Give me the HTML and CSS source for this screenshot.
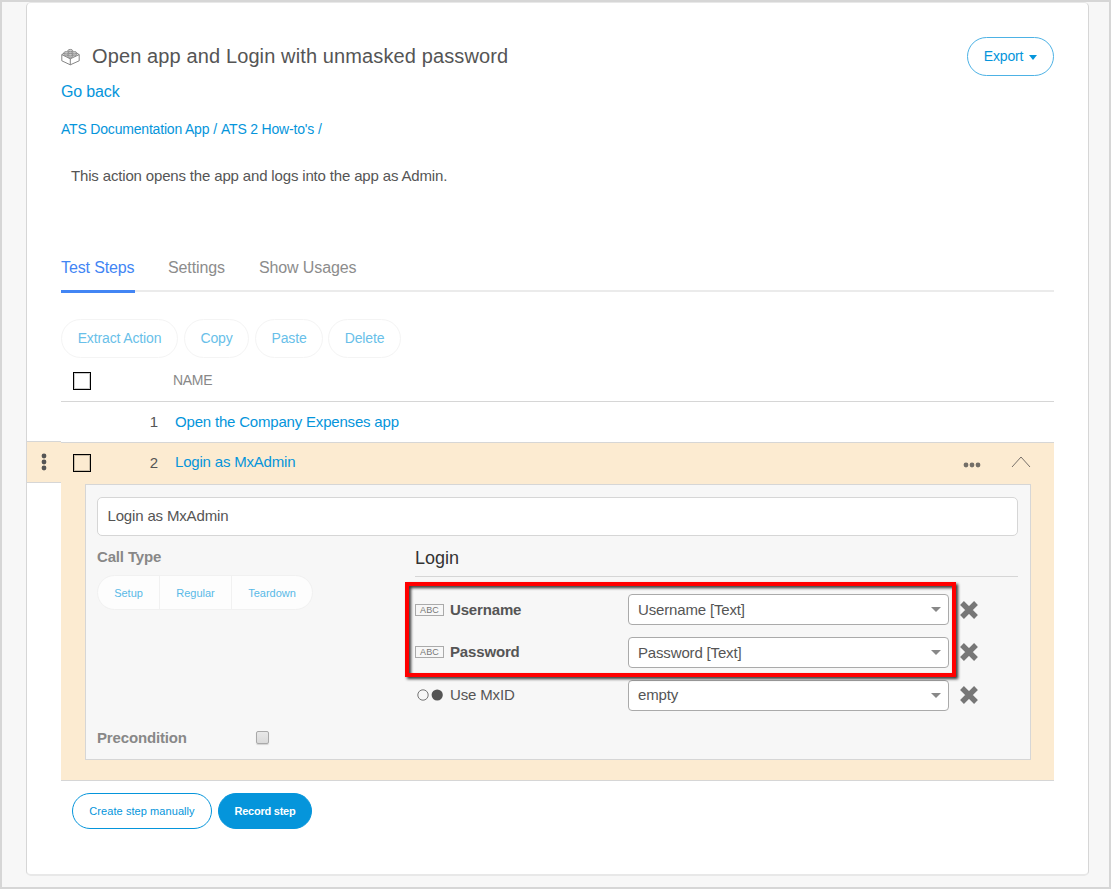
FILE: index.html
```html
<!DOCTYPE html>
<html lang="en">
<head>
<meta charset="utf-8">
<title>Open app and Login with unmasked password</title>
<link rel="stylesheet" href="styles.css">
</head>
<body>
<div class="frame">
<main class="card">
  <header class="header">
    <svg class="brick" width="20" height="18" viewBox="0 0 20 18" fill="none" stroke="#777" stroke-width=".9"><path fill="#fff" d="M.8 6.6V12.8L9.3 16.8L18.2 12.8V6.6L9.3 10.8Z"/><path d="M9.3 10.8V16.8M.8 6.6L3.6 4.8M18.2 6.6L15.2 4.8"/><g fill="#ccc" stroke="#888"><path d="M7 2.6v2a2.3 1.2 0 0 0 4.6 0v-2"/><ellipse cx="9.3" cy="2.6" rx="2.3" ry="1.2"/><path d="M3 4.8v2a2.3 1.2 0 0 0 4.6 0v-2M11 4.8v2a2.3 1.2 0 0 0 4.6 0v-2"/><ellipse cx="5.3" cy="4.8" rx="2.3" ry="1.2"/><ellipse cx="13.3" cy="4.8" rx="2.3" ry="1.2"/><path d="M7 6.8v2a2.3 1.2 0 0 0 4.6 0v-2"/><ellipse cx="9.3" cy="6.8" rx="2.3" ry="1.2"/></g></svg>
    <h1 class="title">Open app and Login with unmasked password</h1>
    <button class="btn export">Export<span class="caret"></span></button>
  </header>
  <a class="back"><span>Go back</span></a>
  <nav class="crumbs"><a>ATS Documentation App</a><i>/</i><a>ATS 2 How-to's</a><i>/</i></nav>
  <p class="description">This action opens the app and logs into the app as Admin.</p>
  <nav class="tabs"><a class="tab active">Test Steps</a><a class="tab settings">Settings</a><a class="tab usages">Show Usages</a></nav>
  <div class="toolbar">
    <button class="btn ghost extract">Extract Action</button>
    <button class="btn ghost copy">Copy</button>
    <button class="btn ghost paste">Paste</button>
    <button class="btn ghost delete">Delete</button>
  </div>
  <div class="row head"><span class="check"></span><span class="num"></span><span class="name">NAME</span></div>
  <div class="row first"><span class="check hidden"></span><span class="num">1</span><a class="link one">Open the Company Expenses app</a></div>
  <section class="step">
    <div class="row second">
      <span class="handle"><svg width="6" height="18" viewBox="0 0 6 18" fill="#555"><circle cx="3" cy="3" r="2.4"/><circle cx="3" cy="9" r="2.4"/><circle cx="3" cy="15" r="2.4"/></svg></span>
      <span class="check"></span><span class="num">2</span><a class="link two">Login as MxAdmin</a>
      <svg class="dots" width="18" height="6" viewBox="0 0 18 6" fill="#736e67"><circle cx="3" cy="3" r="2.4"/><circle cx="9" cy="3" r="2.4"/><circle cx="15" cy="3" r="2.4"/></svg>
      <svg class="chevron" width="20" height="12" viewBox="0 0 20 12" fill="none" stroke="#777069" stroke-width="1"><path d="M1 11L10 1L19 11"/></svg>
    </div>
    <div class="panel">
      <div class="input"><span>Login as MxAdmin</span></div>
      <div class="columns">
        <div class="left">
          <h2 class="label calltype">Call Type</h2>
          <div class="segments"><button class="setup">Setup</button><button class="regular">Regular</button><button class="teardown">Teardown</button></div>
        </div>
        <div class="right">
          <h2 class="heading"><span>Login</span></h2>
          <div class="params">
            <div class="param"><span class="abc">ABC</span><b class="plabel user">Username</b><div class="select"><span>Username [Text]</span></div><svg class="cross" width="20" height="20" viewBox="0 0 20 20"><path d="M3 3L17 17M17 3L3 17"/></svg></div>
            <div class="param raised"><span class="abc">ABC</span><b class="plabel pass">Password</b><div class="select"><span>Password [Text]</span></div><svg class="cross" width="20" height="20" viewBox="0 0 20 20"><path d="M3 3L17 17M17 3L3 17"/></svg></div>
            <div class="param raised"><svg class="bool" width="30" height="12" viewBox="0 0 30 12"><circle cx="8" cy="6" r="5.2" fill="none" stroke="#666" stroke-width=".9"/><circle cx="22.2" cy="6" r="5.6" fill="#555"/></svg><span class="plabel mxid">Use MxID</span><div class="select"><span class="empty">empty</span></div><svg class="cross" width="20" height="20" viewBox="0 0 20 20"><path d="M3 3L17 17M17 3L3 17"/></svg></div>
            <div class="highlight"></div>
          </div>
        </div>
      </div>
      <div class="precondition"><span class="label pre">Precondition</span><span class="box"></span></div>
    </div>
  </section>
  <footer class="actions"><button class="btn small create">Create step manually</button><button class="btn small record">Record step</button></footer>
</main>
</div>
</body>
</html>
```

FILE: styles.css
```css
* { box-sizing: border-box; }
body { margin: 0; font-family: "Liberation Sans", Arial, sans-serif; font-size: 15px; letter-spacing: -.16px; color: #555; }
h1, h2, p { margin: 0; font-weight: normal; }
i { font-style: normal; }
button { font-family: inherit; padding: 0; white-space: nowrap; }
svg { display: block; flex: none; }
a, span, b { white-space: nowrap; }
.frame { width: 1111px; height: 889px; border: 2px solid #d6d6d6; background: #f7f7f7; padding-left: 24px; overflow: hidden; }
.card { width: 1063px; height: 874px; background: #fff; border: 1px solid #d6d6d6; border-top-color: #e8e8e8; border-bottom: 2px solid #e8e8e8; border-radius: 5px; padding: 34px 34px 0; }

.header { display: flex; align-items: center; height: 39px; }
.title { font-size: 20px; letter-spacing: .12px; margin-left: 11px; padding-bottom: 1px; }
.btn { border: 1px solid #0595db; border-radius: 20px; background: #fff; color: #0595db; height: 39px; font-size: 14px; letter-spacing: -.14px; padding-bottom: 2px; flex: none; }
.export { width: 87px; margin-left: auto; display: flex; align-items: center; justify-content: center; border: 1.5px solid #4db2e5; }
.caret { border: 4.5px solid transparent; border-top: 5px solid #0595db; border-bottom: 0; margin: 4px 0 0 6px; }
.back { display: flex; align-items: center; height: 30px; font-size: 16px; color: #0595db; padding-top: 1px; }
.crumbs { display: flex; align-items: center; height: 45px; gap: 4px; font-size: 14px; letter-spacing: -.19px; color: #0595db; }
.description { height: 48px; line-height: 49px; padding-left: 10px; }
.tabs { display: flex; margin-top: 44px; height: 49px; border-bottom: 2px solid #ebebeb; font-size: 16px; line-height: 49px; letter-spacing: -.12px; color: #8c8c8c; }
.tab { height: 50px; }
.active { width: 74px; color: #4285f4; border-bottom: 3px solid #4285f4; }
.settings { margin-left: 33px; width: 57px; }
.usages { margin-left: 34px; }
.toolbar { display: flex; gap: 6px; margin-top: 27px; }
.ghost { border-color: #f4f4f4; color: #69bfe9; }
.extract { width: 117px; }
.copy { width: 65px; }
.paste { width: 68px; }
.delete { width: 73px; margin-left: -1px; }

.row { display: flex; align-items: center; }
.head { height: 44px; border-bottom: 1px solid #d6d6d6; }
.first { height: 41px; border-bottom: 1px solid #d6d6d6; }
.check { width: 18px; height: 18px; margin-left: 12px; border: 1px solid #000; box-shadow: inset 0 0 0 1px rgba(0,0,0,.2); flex: none; }
.head .check { margin-top: 2px; }
.hidden { visibility: hidden; }
.num { width: 67px; text-align: right; padding-bottom: 1px; }
.name { margin-left: 15px; font-size: 14px; letter-spacing: -.3px; color: #888; }
.link { margin-left: 17px; letter-spacing: -.19px; color: #0595db; padding-bottom: 2px; }
.step { background: #fcebd1; height: 338px; border-bottom: 1px solid #d6d6d6; }
.second { height: 41px; margin-left: -34px; }
.second .link { padding-bottom: 4px; }
.second .num { padding-bottom: 2px; }
.handle { align-self: flex-start; display: flex; align-items: center; justify-content: center; width: 34px; height: 42px; margin-top: -2px; flex: none; background: #fcebd1; border-top: 1px solid #d6d6d6; border-bottom: 1px solid #d6d6d6; }
.second .check { margin: 0 0 2px 12px; }
.dots { margin: 3px 30px 0 auto; }
.chevron { margin: 0 23px 3px 0; }

.panel { margin: 0 23px 0 24px; height: 276px; border: 1px solid #d6d6d6; background: #f7f7f7; padding: 12px 12px 0 11px; }
.input { display: flex; align-items: center; height: 39px; border: 1px solid #d6d6d6; border-radius: 5px; background: #fff; padding: 0 0 2px 9.5px; }
.columns { display: flex; height: 188px; }
.left { width: 318px; }
.label { font-size: 15px; font-weight: bold; color: #888; }
.calltype { height: 39px; line-height: 42px; }
.segments { display: flex; width: 216px; height: 35px; border: 1px solid #f1f1f1; border-radius: 18px; background: #fdfdfd; overflow: hidden; }
.segments button { border: 0; border-left: 1px solid #f1f1f1; background: none; color: #59b9e7; font-size: 11px; }
.segments .setup { width: 61px; border: 0; }
.regular { width: 72px; }
.teardown { flex: 1; }
.right { flex: 1; }
.heading { height: 41px; line-height: 44px; border-bottom: 1px solid #d6d6d6; font-size: 18px; letter-spacing: 0; color: #333; }
.params { position: relative; display: grid; gap: 12px; padding-top: 17px; }
.param { display: flex; align-items: center; height: 31px; }
.abc { width: 29px; height: 12px; border: 1px solid #aaa; font-size: 9px; line-height: 11px; letter-spacing: .1px; text-align: center; color: #777; }
.plabel { width: 178px; margin-left: 6px; }
.bool { margin-right: -1px; }
.raised > .abc { margin-bottom: 2px; }
.raised > .plabel, .raised > .bool, .raised > .cross { margin-bottom: 2px; }
.select { display: flex; align-items: center; justify-content: space-between; width: 321px; height: 31px; padding: 0 7px 0 9px; border: 1px solid #aaa; border-radius: 4px; background: #fff; }
.select::after { content: ""; border: 5px solid transparent; border-top: 5px solid #888; border-bottom: 0; }
.empty { padding-bottom: 2px; }
.cross { margin-left: 10px; stroke: #777; stroke-width: 5.4; }
.highlight { position: absolute; left: -10px; top: 5px; width: 551px; height: 95px; border: 4px solid #f00; filter: drop-shadow(2px 2px 1.5px rgba(0,0,0,.8)); }
.precondition { display: flex; align-items: center; height: 27px; }
.pre { width: 159px; padding-bottom: 1px; }
.box { width: 13px; height: 13px; border: 1px solid #a9a9a9; border-radius: 2px; background: linear-gradient(#e8e8e8, #dadada); box-shadow: 0 1px 1px rgba(0,0,0,.15); }

.actions { display: flex; gap: 6px; padding: 12px 0 0 11px; }
.small { height: 36px; font-size: 11px; padding: 0; letter-spacing: .07px; }
.create { width: 140px; }
.record { width: 94px; background: #0595db; color: #fff; font-weight: bold; letter-spacing: -.24px; }
```
